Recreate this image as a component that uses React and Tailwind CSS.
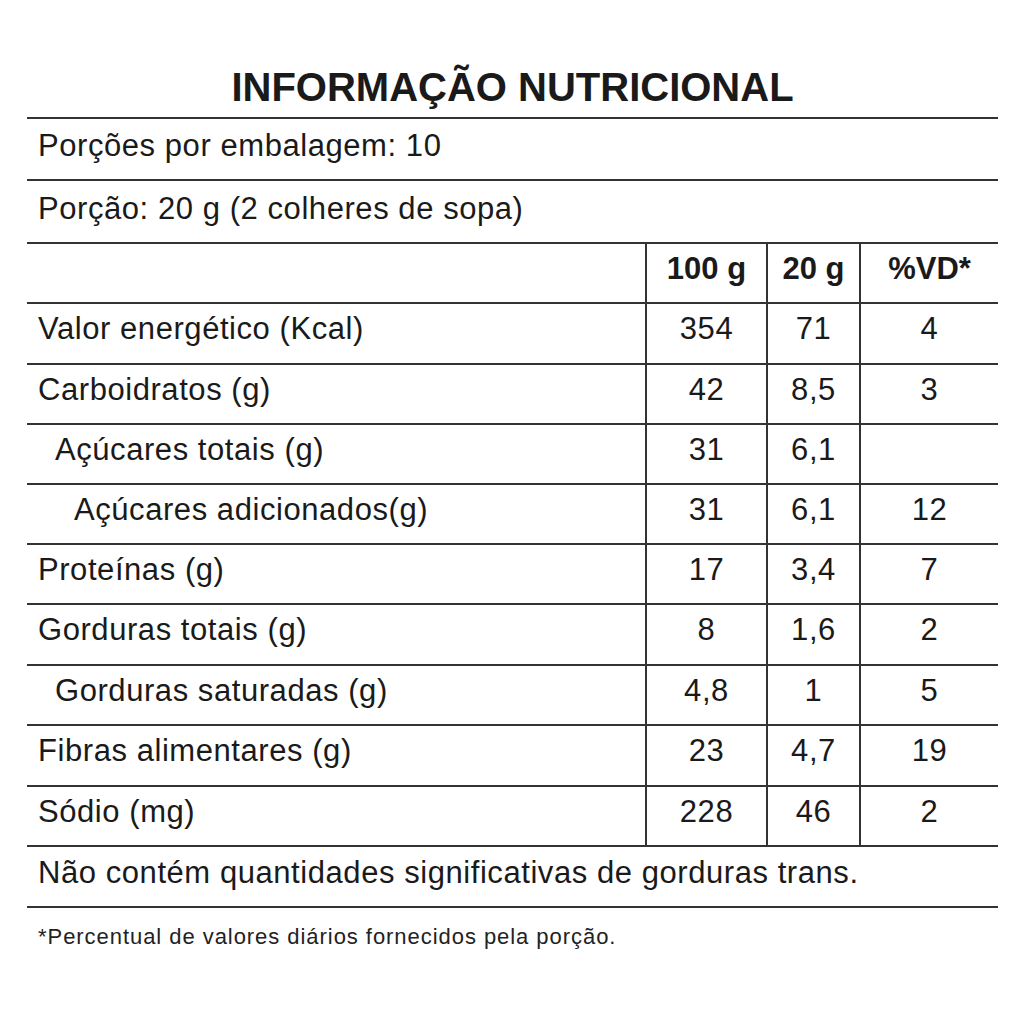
import React from "react";

const rows = [
  { label: "Valor energético (Kcal)", indent: "pl-[11px]", a: "354", b: "71", c: "4", h: "h-[61px]" },
  { label: "Carboidratos (g)", indent: "pl-[11px]", a: "42", b: "8,5", c: "3", h: "h-[60px]" },
  { label: "Açúcares totais (g)", indent: "pl-[28px]", a: "31", b: "6,1", c: "", h: "h-[60px]" },
  { label: "Açúcares adicionados(g)", indent: "pl-[47px]", a: "31", b: "6,1", c: "12", h: "h-[60px]" },
  { label: "Proteínas (g)", indent: "pl-[11px]", a: "17", b: "3,4", c: "7", h: "h-[60px]" },
  { label: "Gorduras totais (g)", indent: "pl-[11px]", a: "8", b: "1,6", c: "2", h: "h-[61px]" },
  { label: "Gorduras saturadas (g)", indent: "pl-[28px]", a: "4,8", b: "1", c: "5", h: "h-[60px]" },
  { label: "Fibras alimentares (g)", indent: "pl-[11px]", a: "23", b: "4,7", c: "19", h: "h-[61px]" },
  { label: "Sódio (mg)", indent: "pl-[11px]", a: "228", b: "46", c: "2", h: "h-[60px]" },
];

export default function App() {
  return (
    <div
      className="bg-white min-h-[1024px] text-[#1a1a1a]"
      style={{ fontFamily: '"Liberation Sans", Arial, sans-serif' }}
    >
      <div className="ml-[27px] w-[971px] pt-[64px]">
        <h1 className="text-center text-[40px] font-bold leading-[46px] pb-[7px] border-b-2 border-[#333]">
          INFORMAÇÃO NUTRICIONAL
        </h1>
        <div className="h-[62px] border-b-2 border-[#333] pl-[11px] text-[31px] tracking-[0.56px] leading-[54px]">
          Porções por embalagem: 10
        </div>
        <div className="h-[63px] border-b-2 border-[#333] pl-[11px] text-[31px] tracking-[0.56px] leading-[55px]">
          Porção: 20 g (2 colheres de sopa)
        </div>
        <div className="grid grid-cols-[618px_121px_93px_139px] h-[60px] border-b-2 border-[#333] text-[31px] leading-[50px] font-bold">
          <div></div>
          <div className="border-l-2 border-[#333] text-center">100 g</div>
          <div className="border-l-2 border-[#333] text-center">20 g</div>
          <div className="border-l-2 border-[#333] text-center">%VD*</div>
        </div>
        {rows.map((r) => (
          <div
            key={r.label}
            className={`grid grid-cols-[618px_121px_93px_139px] ${r.h} border-b-2 border-[#333] text-[31px] tracking-[0.56px] leading-[49px]`}
          >
            <div className={r.indent}>{r.label}</div>
            <div className="border-l-2 border-[#333] text-center">{r.a}</div>
            <div className="border-l-2 border-[#333] text-center">{r.b}</div>
            <div className="border-l-2 border-[#333] text-center">{r.c}</div>
          </div>
        ))}
        <div className="h-[61px] border-b-2 border-[#333] pl-[11px] text-[31px] tracking-[0.56px] leading-[51px]">
          Não contém quantidades significativas de gorduras trans.
        </div>
        <div className="pl-[11px] pt-[16px] text-[22px] tracking-[0.95px] leading-[26px] text-[#222]">
          *Percentual de valores diários fornecidos pela porção.
        </div>
      </div>
    </div>
  );
}
